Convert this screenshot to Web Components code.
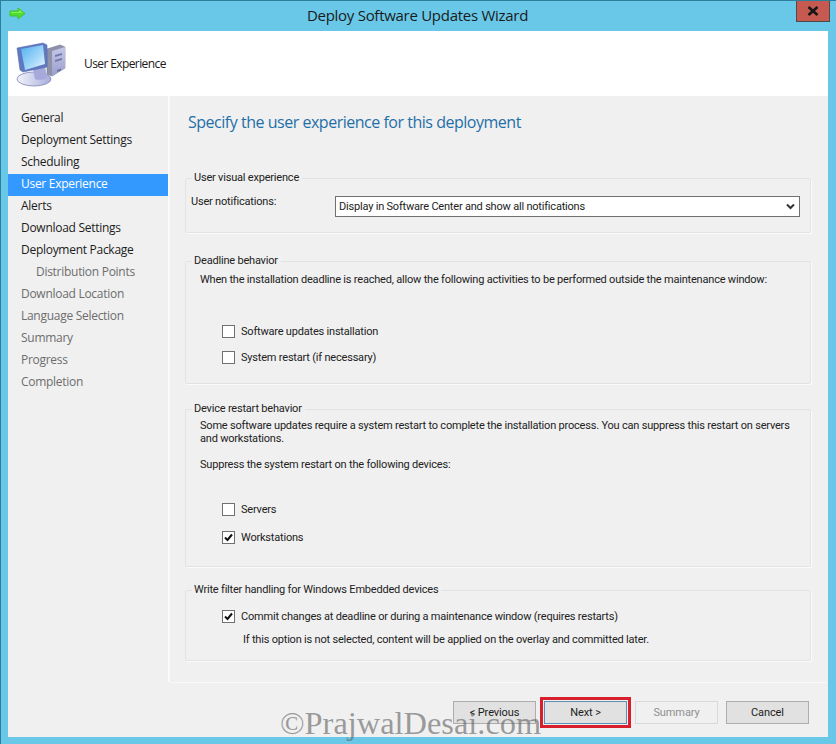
<!DOCTYPE html>
<html><head><meta charset="utf-8"><style>
html,body{margin:0;padding:0;width:836px;height:744px;overflow:hidden;background:#69c8e8}
body{font:12px/16px "Open Sans","Noto Sans",sans-serif;color:#1a1a1a;letter-spacing:-.28px}
</style></head><body>
<wizard-window>
  <span slot="title">Deploy Software Updates Wizard</span>
  <wizard-header slot="header">User Experience</wizard-header>
  <wizard-nav slot="nav">
    <nav-item>General</nav-item><nav-item>Deployment Settings</nav-item><nav-item>Scheduling</nav-item>
    <nav-item selected>User Experience</nav-item><nav-item>Alerts</nav-item><nav-item>Download Settings</nav-item>
    <nav-item>Deployment Package</nav-item><nav-item muted indent>Distribution Points</nav-item>
    <nav-item muted>Download Location</nav-item><nav-item muted>Language Selection</nav-item>
    <nav-item muted>Summary</nav-item><nav-item muted>Progress</nav-item><nav-item muted>Completion</nav-item>
  </wizard-nav>
  <wizard-page slot="page" heading="Specify the user experience for this deployment">
    <group-box legend="User visual experience" style="--h:63px;--after:20px">
      <select-row label="User notifications:" value="Display in Software Center and show all notifications"></select-row>
    </group-box>
    <group-box legend="Deadline behavior" style="--h:131px;--after:17px">
      <wizard-text style="--top:4px">When the installation deadline is reached, allow the following activities to be performed outside the maintenance window:</wizard-text>
      <check-row style="--top:38px">Software updates installation</check-row>
      <check-row style="--top:11px">System restart (if necessary)</check-row>
    </group-box>
    <group-box legend="Device restart behavior" style="--h:166px;--after:15px">
      <wizard-text style="--top:2px">Some software updates require a system restart to complete the installation process. You can suppress this restart on servers and workstations.</wizard-text>
      <wizard-text style="--top:13px">Suppress the system restart on the following devices:</wizard-text>
      <check-row style="--top:31px">Servers</check-row>
      <check-row style="--top:13px" checked>Workstations</check-row>
    </group-box>
    <group-box legend="Write filter handling for Windows Embedded devices" style="--h:79px;--after:0px">
      <check-row style="--top:11px" checked>Commit changes at deadline or during a maintenance window (requires restarts)</check-row>
      <wizard-text style="--top:9px;--left:57px">If this option is not selected, content will be applied on the overlay and committed later.</wizard-text>
    </group-box>
  </wizard-page>
  <wizard-footer slot="footer">
    <wizard-button>&lt; Previous</wizard-button>
    <wizard-button focused>Next &gt;</wizard-button>
    <wizard-button disabled>Summary</wizard-button>
    <wizard-button>Cancel</wizard-button>
  </wizard-footer>
  <span slot="mark">©PrajwalDesai.com</span>
</wizard-window>
<script>
function def(name, css, html){
  customElements.define(name, class extends HTMLElement{
    connectedCallback(){
      if(this.shadowRoot) return;
      const r=this.attachShadow({mode:'open'});
      r.innerHTML='<style>'+css+'</style>'+(typeof html==='function'?html(this):html);
    }
  });
}
def('wizard-window',`
:host{display:flex;flex-direction:column;position:relative;width:836px;height:744px;box-sizing:border-box;background:#69c8e8;
 border:1px solid #2b7f9b;border-width:1px 0 0 1px;overflow:hidden}
.bar{display:flex;align-items:flex-start;height:30px;flex:none;position:relative}
.arrow{margin:6px 0 0 8px;flex:none}
.title{position:absolute;left:0;right:0;top:4px;text-align:center;font-size:15px;line-height:20px;letter-spacing:-.28px;color:#1b1b1b;padding-right:2px}
.close{position:absolute;left:795px;top:-1px;width:32px;height:20px;background:#c75a50;border:1px solid #4d4a4a;display:flex;align-items:center;justify-content:center}
.client{flex:1;margin:0 8px 7px 7px;display:flex;flex-direction:column;min-height:0;background:#f0f0f0}
.body{flex:1;display:flex;min-height:0}
.mark{position:absolute;left:279px;top:702px;font:32.400px/40px "Liberation Serif",serif;letter-spacing:0;color:rgba(95,95,95,.6);pointer-events:none}
`,`<div class="bar">
<svg class="arrow" width="20" height="16" viewBox="0 0 20 16"><path d="M1 4h8V1l7 5.500L9 12V9H1z" fill="#4fdc30" stroke="#43c52a" stroke-linejoin="round"/><path d="M2 5h8V3l4 3H2z" fill="#86f25c"/></svg>
<div class="title"><slot name="title"></slot></div>
<div class="close"><svg width="12" height="10" viewBox="0 0 12 10"><path d="M1.500 1l9 8M10.500 1l-9 8" stroke="#161616" stroke-width="2.600" fill="none"/></svg></div>
</div>
<div class="client"><slot name="header"></slot><div class="body"><slot name="nav"></slot><slot name="page"></slot></div><slot name="footer"></slot></div>
<div class="mark"><slot name="mark"></slot></div>`);
def('wizard-header',`
:host{display:flex;align-items:center;height:65px;flex:none;background:#fff;letter-spacing:-.6px}
svg{margin:6px 0 0 7px;flex:none;align-self:flex-start}
span{margin-left:17px;margin-top:1px}
`,`<svg width="52" height="52" viewBox="0 0 52 52">
<defs><linearGradient id="s" x1="0" y1="0" x2="1" y2="1"><stop offset="0" stop-color="#4fb0f2"/><stop offset=".6" stop-color="#a5d8f8"/><stop offset="1" stop-color="#eef8fe"/></linearGradient>
<linearGradient id="b" x1="0" y1="0" x2="0" y2="1"><stop offset="0" stop-color="#c5c8e8"/><stop offset="1" stop-color="#9a9ecb"/></linearGradient>
<linearGradient id="d" x1="0" y1="0" x2="1" y2="0"><stop offset="0" stop-color="#f2f3fb"/><stop offset="1" stop-color="#a9addb"/></linearGradient></defs>
<path d="M32 12l13-4 5 2v21l-13 8-5-2z" fill="#8e91a8" stroke="#777a96" stroke-width=".6"/>
<path d="M37 14l13-4v21l-13 8z" fill="url(#b)"/>
<path d="M40 18l7-2v2l-7 2zM40 23l7-2v2l-7 2z" fill="#7479a8"/><path d="M42 33l4-1.500v2l-4 1.500z" fill="#6d72a0"/>
<ellipse cx="19" cy="42" rx="17" ry="7" fill="url(#d)" stroke="#7f84b5" stroke-width=".8"/>
<path d="M18 32l12-3 2 12c-3 2-9 2.500-12 1z" fill="#a6aadb"/>
<path d="M2 11l26-5 4 2v22l-24 5-3-2z" fill="#5f78c2" stroke="#5a6fae" stroke-width=".6"/>
<path d="M6 12l22-4 2 19-20 6z" fill="url(#s)"/></svg><span><slot></slot></span>`);
def('wizard-nav',`
:host{display:block;width:160px;flex:none;padding-top:12px;box-sizing:border-box;background:#f0f0f0}
`,`<slot></slot>`);
def('nav-item',`
:host{display:block;height:22px;line-height:20px;padding-left:13px;box-sizing:border-box;color:#1c1c1c;white-space:nowrap}
:host([selected]){background:#3399ff;color:#fff}
:host([muted]){color:#6d6d6d}
:host([indent]){padding-left:28px}
`,`<slot></slot>`);
def('wizard-page',`
:host{display:block;flex:1;min-width:0;margin-left:2px;box-sizing:border-box;padding:15px 17px 0 15px;box-shadow:-2px 0 0 #fafafa;font-family:Roboto,"Open Sans",sans-serif;font-size:11px;letter-spacing:-.2px}
h1{margin:0 0 37px 3px;font:400 16px/22px "Open Sans","Noto Sans",sans-serif;letter-spacing:-.48px;color:#1f6fa8}
`,el=>`<h1>${el.getAttribute('heading')}</h1><slot></slot>`);
def('group-box',`
:host{display:block;height:var(--h);margin-bottom:var(--after)}
fieldset{margin:0;padding:0;height:100%;box-sizing:border-box;border:1px solid #e3e3e3;box-shadow:1px 1px 0 #fbfbfb;border-radius:2px;display:block}
legend{padding:0 3px 0 2px;margin-left:6px;line-height:16px;color:#222;white-space:nowrap}
`,el=>`<fieldset><legend>${el.getAttribute('legend')}</legend><slot></slot></fieldset>`);
def('wizard-text',`
:host{display:block;margin:var(--top,0) 14px 0 var(--left,14px);line-height:13px;color:#222}
`,`<slot></slot>`);
def('check-row',`
:host{display:flex;align-items:center;height:15px;margin:var(--top,0) 0 0 36px;color:#222;white-space:nowrap}
.b{width:11px;height:11px;border:1px solid #707070;background:#fff;margin-right:6px;flex:none;display:flex}
`,el=>`<div class="b">${el.hasAttribute('checked')?'<svg width="11" height="11" viewBox="0 0 11 11"><path d="M2 5.500l2.500 2.500L9 2.500" fill="none" stroke="#111" stroke-width="2"/></svg>':''}</div><slot></slot>`);
def('select-row',`
:host{display:flex;margin:10px 10px 0 5px;color:#222}
.l{width:144px;flex:none;line-height:16px;white-space:nowrap;margin-top:-2px}
.s{flex:1;height:21px;box-sizing:border-box;border:1px solid #707070;background:#fff;display:flex;align-items:center;justify-content:space-between;padding:0 4px 0 3px}
`,el=>`<div class="l">${el.getAttribute('label')}</div><div class="s"><span>${el.getAttribute('value')}</span><svg width="9" height="7" viewBox="0 0 9 7"><path d="M1 1.500l3.500 3.500L8 1.500" fill="none" stroke="#333" stroke-width="2"/></svg></div>`);
def('wizard-footer',`
:host{display:flex;justify-content:flex-end;gap:8px;height:55px;flex:none;box-sizing:border-box;margin:0 2px 0 162px;padding:18px 17px 0 0;border-top:1px solid #fafafa;background:#f0f0f0;font-family:Roboto,"Open Sans",sans-serif;font-size:11px;letter-spacing:-.1px}
`,`<slot></slot>`);
def('wizard-button',`
:host{display:flex;align-items:center;justify-content:center;width:83px;height:23px;box-sizing:border-box;border:1px solid #adadad;background:#e1e1e1;color:#1c1c1c}
:host([focused]){border-color:#5a8fb5;outline:3px solid #d8202c;outline-offset:1px}
:host([disabled]){background:#f0f0f0;border-color:#d9d9d9;color:#8f8f8f}
`,`<slot></slot>`);
</script>
</body></html>
